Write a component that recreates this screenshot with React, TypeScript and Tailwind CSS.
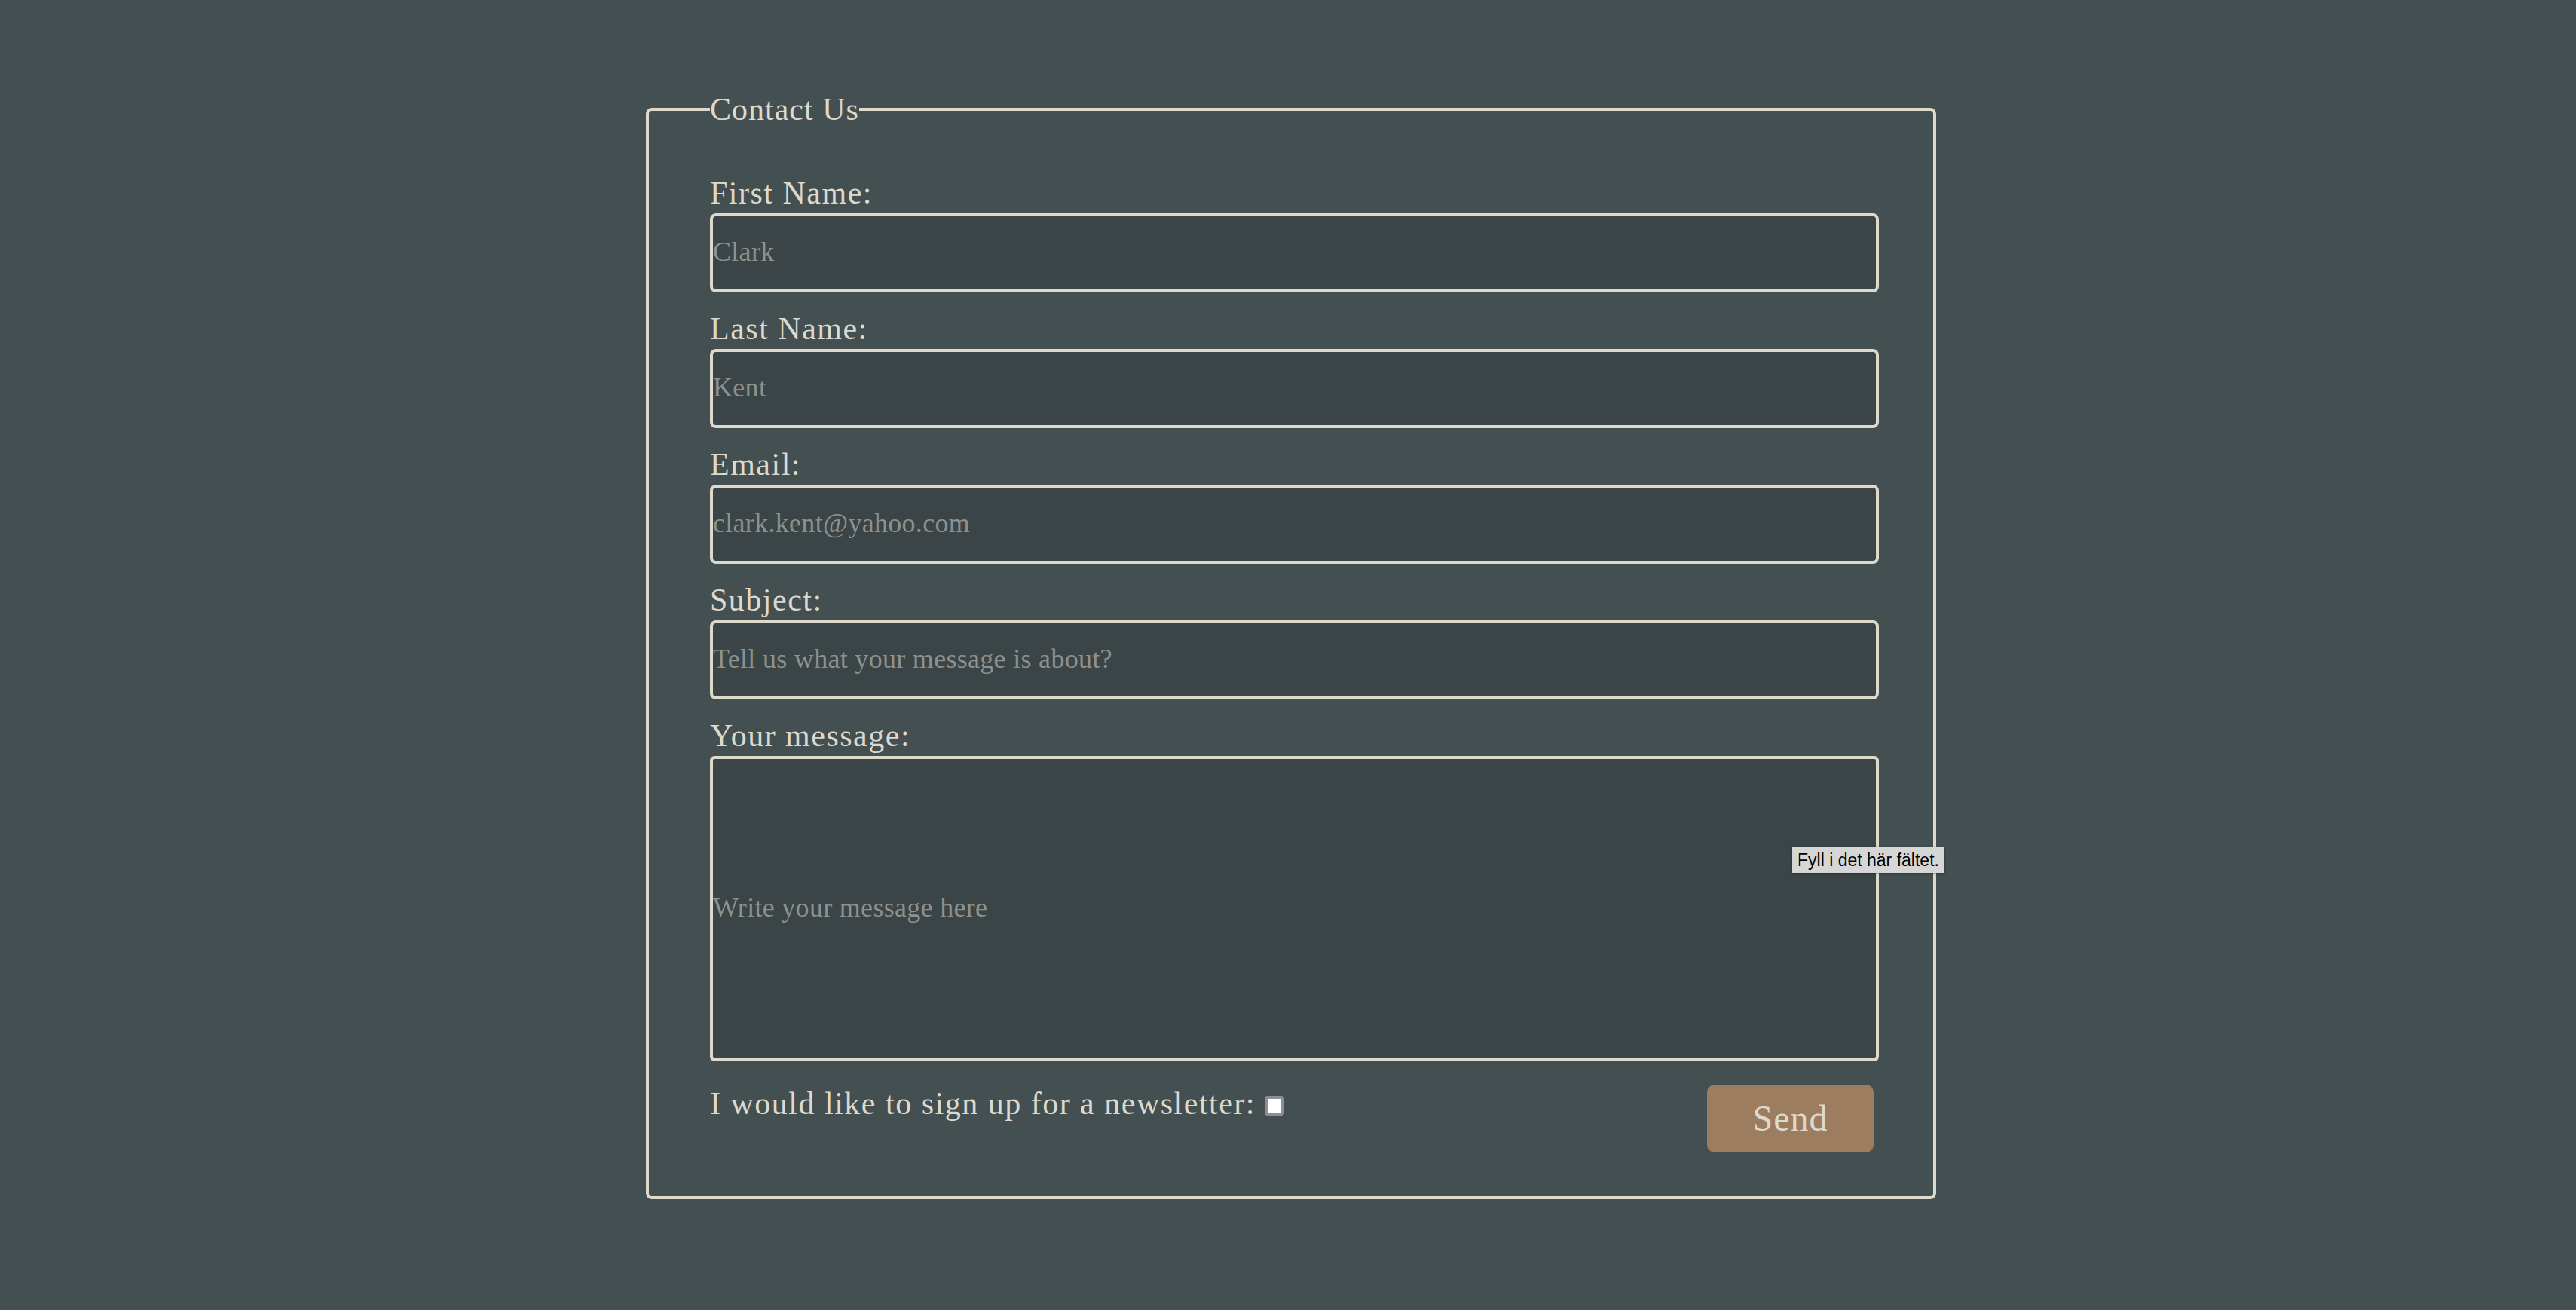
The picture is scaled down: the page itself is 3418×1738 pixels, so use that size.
import { useState } from 'react'

const serif = "font-['Liberation_Serif','DejaVu_Serif',serif]"

function Field({ label, placeholder }: { label: string; placeholder: string }) {
  return (
    <div className="flex flex-col">
      <label className="text-[42px] leading-[50px] tracking-[1.5px] text-[#ddd9cd]">{label}</label>
      <input
        type="text"
        placeholder={placeholder}
        className="mt-[2px] h-[105px] w-full rounded-[8px] border-[4px] border-[#ddd9cd] bg-[#3b4446] px-0 pb-[3px] text-[36px] tracking-[0.3px] text-[#ddd9cd] outline-none placeholder:text-[#8d918e]"
      />
    </div>
  )
}

export default function App() {
  const [newsletter, setNewsletter] = useState(false)

  return (
    <div className={`h-[1738px] w-full overflow-hidden bg-[#434f51] pt-[120px] ${serif}`}>
      <form onSubmit={e => e.preventDefault()} className="ml-[857px] w-[1712px]">
        <fieldset className="rounded-[8px] border-[4px] border-[#ddd9cd] pb-[58px] pl-[81px] pr-[72px] pt-[61px]">
          <legend className="p-0 text-[42px] leading-[50px] tracking-[1px] text-[#ddd9cd]">Contact Us</legend>

          <div className="flex flex-col gap-[23px]">
            <Field label="First Name:" placeholder="Clark" />
            <Field label="Last Name:" placeholder="Kent" />
            <Field label="Email:" placeholder="clark.kent@yahoo.com" />
            <Field label="Subject:" placeholder="Tell us what your message is about?" />

            {/* Message (tall input, placeholder centred) */}
            <div className="flex flex-col">
              <label className="text-[42px] leading-[50px] tracking-[1.5px] text-[#ddd9cd]">Your message:</label>
              <div className="relative mt-[2px]">
                <input
                  type="text"
                  required
                  placeholder="Write your message here"
                  className="h-[405px] w-full rounded-[6px] border-[4px] border-[#ddd9cd] bg-[#3b4446] px-0 pb-[3px] text-[36px] tracking-[0.3px] text-[#ddd9cd] outline-none placeholder:text-[#8d918e]"
                />
                <div className="absolute left-[1436px] top-[121px] whitespace-nowrap bg-[#d6d6d6] px-[7px] py-[2px] font-['Liberation_Sans',Arial,sans-serif] text-[23px] leading-[30px] text-black shadow-[0_1px_3px_rgba(0,0,0,0.35)]">
                  Fyll i det här fältet.
                </div>
              </div>
            </div>
          </div>

          <div className="mt-[31px] flex items-start justify-between pr-[7px]">
            <label className="flex items-center gap-[12px] text-[42px] leading-[50px] tracking-[1.5px] text-[#ddd9cd]">
              I would like to sign up for a newsletter:
              <input
                type="checkbox"
                checked={newsletter}
                onChange={e => setNewsletter(e.target.checked)}
                className="mt-[6px] h-[26px] w-[26px] appearance-none rounded-[4px] border-[4px] border-[#8e8e9a] bg-white"
              />
            </label>
            <button
              type="submit"
              className="h-[90px] w-[221px] rounded-[10px] bg-[#9c7d60] text-[48px] tracking-[1px] text-[#ddd9cd]"
            >
              Send
            </button>
          </div>
        </fieldset>
      </form>
    </div>
  )
}
